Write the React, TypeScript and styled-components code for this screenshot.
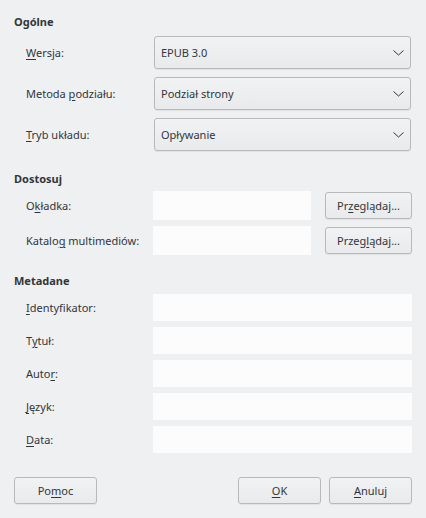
import React from "react";
import styled, { createGlobalStyle } from "styled-components";

const Global = createGlobalStyle`
  html, body { margin: 0; padding: 0; background: #eff0f1; }
  body { font-family: "Noto Sans", "Open Sans", sans-serif; font-size: 11px; color: #31363b; }
`;

const Dialog = styled.div`
  width: 426px;
  height: 518px;
  box-sizing: border-box;
  padding: 13px 14px 0 14px;
  display: flex;
  flex-direction: column;
`;

const Section = styled.section<{ $top: number }>`
  margin-top: ${(p) => p.$top}px;
  display: flex;
  flex-direction: column;
`;

const Header = styled.div<{ $gap: number }>`
  font-weight: bold;
  height: 18px;
  line-height: 18px;
  margin-bottom: ${(p) => p.$gap}px;
`;

const Rows = styled.div<{ $gap: number }>`
  display: flex;
  flex-direction: column;
  gap: ${(p) => p.$gap}px;
`;

const Row = styled.div<{ $h: number }>`
  display: grid;
  grid-template-columns: 127px 1fr;
  align-items: center;
  height: ${(p) => p.$h}px;
  padding-left: 12px;
`;

const FileRow = styled(Row)`
  grid-template-columns: 127px 158px 1fr;
`;

const Label = styled.span`
  white-space: nowrap;
`;

const Mn = styled.span`
  text-decoration: underline;
  text-underline-offset: 2px;
`;

const Combo = styled.div`
  box-sizing: border-box;
  height: 100%;
  margin-left: 1px;
  margin-right: 1px;
  border: 1px solid #b7b9bb;
  border-radius: 3px;
  background: linear-gradient(#f1f2f3, #e9eaeb);
  box-shadow: 0 1px 1px rgba(0, 0, 0, 0.06);
  display: flex;
  align-items: center;
  justify-content: space-between;
  padding: 0 6px 0 6px;
`;

const Field = styled.div`
  height: 100%;
  background: #fcfcfc;
`;

const Button = styled.div<{ $w?: number }>`
  box-sizing: border-box;
  height: 27px;
  width: ${(p) => (p.$w ? `${p.$w}px` : "auto")};
  border: 1px solid #b7b9bb;
  border-radius: 3px;
  background: linear-gradient(#f1f2f3, #e9eaeb);
  box-shadow: 0 1px 1px rgba(0, 0, 0, 0.06);
  display: flex;
  align-items: center;
  justify-content: center;
`;

const BrowseButton = styled(Button)`
  justify-self: end;
  width: 87px;
`;

const Footer = styled.div`
  margin-top: 24px;
  display: flex;
  align-items: center;
  gap: 8px;
`;

const Spacer = styled.div`
  flex: 1;
`;

const Chevron = () => (
  <svg width="11" height="6" viewBox="0 0 11 6">
    <polyline points="0.5,0.5 5.5,5 10.5,0.5" fill="none" stroke="#31363b" strokeWidth="1" />
  </svg>
);

export default function App() {
  return (
    <>
      <Global />
      <Dialog>
        <Section $top={0}>
          <Header $gap={5}>Ogólne</Header>
          <Rows $gap={8}>
            <Row $h={33}>
              <Label><Mn>W</Mn>ersja:</Label>
              <Combo>EPUB 3.0<Chevron /></Combo>
            </Row>
            <Row $h={33}>
              <Label>Metoda <Mn>p</Mn>odziału:</Label>
              <Combo>Podział strony<Chevron /></Combo>
            </Row>
            <Row $h={33}>
              <Label><Mn>T</Mn>ryb układu:</Label>
              <Combo>Opływanie<Chevron /></Combo>
            </Row>
          </Rows>
        </Section>
        <Section $top={19}>
          <Header $gap={3}>Dostosuj</Header>
          <Rows $gap={6}>
            <FileRow $h={29}>
              <Label>O<Mn>k</Mn>ładka:</Label>
              <Field />
              <BrowseButton>Pr<Mn>z</Mn>eglądaj...</BrowseButton>
            </FileRow>
            <FileRow $h={29}>
              <Label>Katalo<Mn>g</Mn> multimediów:</Label>
              <Field />
              <BrowseButton>Przeg<Mn>l</Mn>ądaj...</BrowseButton>
            </FileRow>
          </Rows>
        </Section>
        <Section $top={17}>
          <Header $gap={4}>Metadane</Header>
          <Rows $gap={6}>
            <Row $h={27}>
              <Label><Mn>I</Mn>dentyfikator:</Label>
              <Field />
            </Row>
            <Row $h={27}>
              <Label>T<Mn>y</Mn>tuł:</Label>
              <Field />
            </Row>
            <Row $h={27}>
              <Label>Auto<Mn>r</Mn>:</Label>
              <Field />
            </Row>
            <Row $h={27}>
              <Label><Mn>J</Mn>ęzyk:</Label>
              <Field />
            </Row>
            <Row $h={27}>
              <Label><Mn>D</Mn>ata:</Label>
              <Field />
            </Row>
          </Rows>
        </Section>
        <Footer>
          <Button $w={83}>Po<Mn>m</Mn>oc</Button>
          <Spacer />
          <Button $w={83}><Mn>O</Mn>K</Button>
          <Button $w={83}><Mn>A</Mn>nuluj</Button>
        </Footer>
      </Dialog>
    </>
  );
}
